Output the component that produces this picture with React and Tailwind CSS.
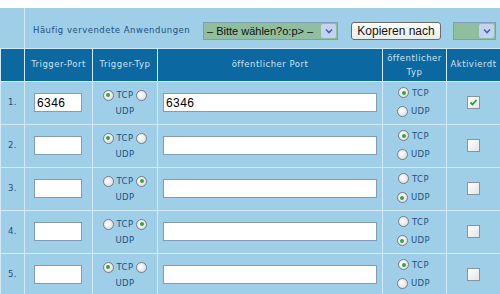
import React from "react";

const rows = [
    { n: "1.", port: "6346", pub: "6346", trig: "tcp", pubTyp: "tcp", on: true },
    { n: "2.", port: "", pub: "", trig: "tcp", pubTyp: "tcp", on: false },
    { n: "3.", port: "", pub: "", trig: "udp", pubTyp: "udp", on: false },
    { n: "4.", port: "", pub: "", trig: "udp", pubTyp: "udp", on: false },
    { n: "5.", port: "", pub: "", trig: "tcp", pubTyp: "tcp", on: false },
];

const Radio = ({ checked }) => (
    <span className="inline-flex items-center justify-center w-[11px] h-[11px] rounded-full border border-[#6f7c88] bg-[radial-gradient(circle_at_40%_40%,#ffffff,#d6d6d6)] align-middle">
        {checked && <span className="w-[4px] h-[4px] rounded-full bg-[#3aa33a]" />}
    </span>
);

const Check = ({ checked }) => (
    <span className="inline-flex items-center justify-center w-[13px] h-[13px] border border-[#8a939c] bg-[linear-gradient(135deg,#ffffff,#e4e4e4)]">
        {checked && (
            <svg width="9" height="9" viewBox="0 0 9 9">
                <path d="M1.5 4.5 L3.5 6.5 L7.5 2" stroke="#27a027" strokeWidth="1.8" fill="none" />
            </svg>
        )}
    </span>
);

const Field = ({ value, w }) => (
    <div className={`${w} h-[19px] bg-white border border-[#7f9db9] px-[2px] flex items-center text-[12px] text-black`} style={{ fontFamily: "'Liberation Sans', Arial, sans-serif" }}>
        {value}
    </div>
);

const GreenSelect = ({ label, w }) => (
    <div className={`${w} h-[18px] flex border border-[#7f9db9] bg-[#8fbf9c]`}>
        <div className="flex-1 pl-[3px] flex items-center text-[11px] text-[#111] whitespace-nowrap overflow-hidden" style={{ fontFamily: "'Liberation Sans', Arial, sans-serif" }}>
            {label}
        </div>
        <div className="w-[15px] m-[1px] bg-[#c4d2f4] rounded-[2px] flex items-center justify-center">
            <svg width="8" height="6" viewBox="0 0 8 6">
                <path d="M1 1.5 L4 4.5 L7 1.5" stroke="#4d61a8" strokeWidth="1.6" fill="none" />
            </svg>
        </div>
    </div>
);

export default function App() {
    const cell = "border border-[#d3eaf6]";
    return (
        <div className="w-[500px] h-[294px] bg-white overflow-hidden pt-2" style={{ fontFamily: "'DejaVu Sans', Verdana, sans-serif" }}>
            <table className="w-[500px] table-fixed border-collapse bg-[#9fcfe8] text-[#1d4f7e]">
                <colgroup>
                    <col className="w-[24px]" />
                    <col className="w-[68px]" />
                    <col className="w-[65px]" />
                    <col className="w-[225px]" />
                    <col className="w-[64px]" />
                    <col className="w-[54px]" />
                </colgroup>
                <tbody>
                    <tr className="h-[40px]">
                        <td className="border-r border-[#d3eaf6]"></td>
                        <td colSpan={5} className="border-b border-[#d3eaf6] pl-[8px] pt-[6px]">
                            <div className="flex items-center">
                                <span className="text-[8.5px] tracking-[0.5px] w-[170px]">Häufig vervendete Anwendungen</span>
                                <GreenSelect w="w-[135px]" label="– Bitte wählen?o:p> –" />
                                <button className="ml-[13px] w-[90px] h-[18px] rounded-[3px] border border-[#6b6b6b] bg-[linear-gradient(#ffffff,#ecece6)] text-[12px] text-[#111] leading-none" style={{ fontFamily: "'Liberation Sans', Arial, sans-serif" }}>
                                    Kopieren nach
                                </button>
                                <div className="ml-[12px]">
                                    <GreenSelect w="w-[43px]" label="" />
                                </div>
                            </div>
                        </td>
                    </tr>
                    <tr className="h-[33px] bg-[#0b68a0] text-[#cde3f2] text-[8.5px] tracking-[0.5px] text-center">
                        <td className={cell}></td>
                        <td className={cell}>Trigger-Port</td>
                        <td className={cell}>Trigger-Typ</td>
                        <td className={cell}>öffentlicher Port</td>
                        <td className={`${cell} leading-[14px]`}>öffentlicher<br />Typ</td>
                        <td className={cell}>Aktivierdt</td>
                    </tr>
                    {rows.map((r) => (
                        <tr key={r.n} className="h-[43px] text-[8.5px] tracking-[0.4px]">
                            <td className={`${cell} text-center`}>{r.n}</td>
                            <td className={`${cell} px-[9px]`}>
                                <Field value={r.port} w="w-[48px]" />
                            </td>
                            <td className={`${cell} text-center leading-[13px] align-top pt-[7px]`}>
                                <div className="flex items-center justify-center gap-[3px]">
                                    <Radio checked={r.trig === "tcp"} />
                                    <span>TCP</span>
                                    <Radio checked={r.trig === "udp"} />
                                </div>
                                <div className="pt-[3px]">UDP</div>
                            </td>
                            <td className={`${cell} px-[5px]`}>
                                <Field value={r.pub} w="w-[214px]" />
                            </td>
                            <td className={`${cell} align-top pt-[5px]`}>
                                <div className="flex flex-col items-center gap-[6px] pr-[2px]">
                                    <div className="flex items-center gap-[3px]">
                                        <Radio checked={r.pubTyp === "tcp"} />
                                        <span>TCP</span>
                                    </div>
                                    <div className="flex items-center gap-[3px]">
                                        <Radio checked={r.pubTyp === "udp"} />
                                        <span>UDP</span>
                                    </div>
                                </div>
                            </td>
                            <td className={`${cell} text-center`}>
                                <div className="flex justify-center">
                                    <Check checked={r.on} />
                                </div>
                            </td>
                        </tr>
                    ))}
                </tbody>
            </table>
        </div>
    );
}
